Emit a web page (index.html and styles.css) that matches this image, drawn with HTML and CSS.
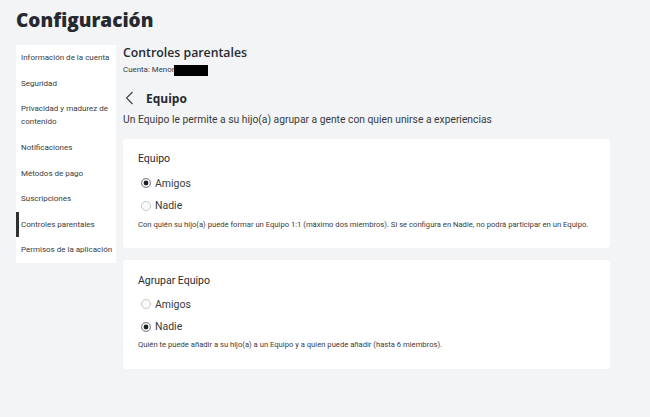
FILE: index.html
```html
<!DOCTYPE html>
<html lang="es">
<head>
<meta charset="utf-8">
<title>Configuración</title>
<link rel="stylesheet" href="styles.css">
</head>
<body>
<h1 class="page-title">Configuración</h1>
<div class="layout">
  <nav class="sidebar">
    <div class="nav-item">Información de la cuenta</div>
    <div class="nav-item">Seguridad</div>
    <div class="nav-item">Privacidad y madurez de contenido</div>
    <div class="nav-item">Notificaciones</div>
    <div class="nav-item">Métodos de pago</div>
    <div class="nav-item">Suscripciones</div>
    <div class="nav-item active">Controles parentales</div>
    <div class="nav-item">Permisos de la aplicación</div>
  </nav>
  <main class="main">
    <h2 class="section-title">Controles parentales</h2>
    <div class="account">Cuenta: Menor<span class="redact"></span></div>
    <div class="back-row">
      <svg class="chev" width="9" height="14" viewBox="0 0 9 14"><polyline points="7.5,1 1.5,7 7.5,13" fill="none" stroke="#393b3d" stroke-width="1.1"/></svg>
      <span class="back-title">Equipo</span>
    </div>
    <p class="intro">Un Equipo le permite a su hijo(a) agrupar a gente con quien unirse a experiencias</p>
    <section class="card">
      <div class="card-title">Equipo</div>
      <div class="radios">
        <div class="radio-row"><span class="radio on"></span><span class="label">Amigos</span></div>
        <div class="radio-row"><span class="radio"></span><span class="label">Nadie</span></div>
      </div>
      <p class="hint">Con quién su hijo(a) puede formar un Equipo 1:1 (máximo dos miembros). Si se configura en Nadie, no podrá participar en un Equipo.</p>
    </section>
    <section class="card">
      <div class="card-title">Agrupar Equipo</div>
      <div class="radios">
        <div class="radio-row"><span class="radio"></span><span class="label">Amigos</span></div>
        <div class="radio-row"><span class="radio on"></span><span class="label">Nadie</span></div>
      </div>
      <p class="hint">Quién te puede añadir a su hijo(a) a un Equipo y a quien puede añadir (hasta 6 miembros).</p>
    </section>
  </main>
</div>
</body>
</html>
```
FILE: styles.css
```css
* { box-sizing: border-box; }
html, body { margin: 0; }
body {
  background: #f2f4f5;
  font-family: Roboto, "Liberation Sans", sans-serif;
  color: #393b3d;
  padding: 6px 16px 0 16px;
}
.page-title {
  margin: 0 0 11px 0;
  font-family: "Open Sans", sans-serif;
  font-size: 19px;
  font-weight: 800;
  line-height: 28px;
  color: #272930;
}
.layout {
  display: flex;
  gap: 7px;
  align-items: flex-start;
}
.sidebar {
  width: 100px;
  background: #fff;
  display: flex;
  flex-direction: column;
}
.nav-item {
  font-size: 8px;
  line-height: 13px;
  padding: 6.3px 2px 6.3px 5px;
  color: #393b3d;
}
.nav-item.active {
  box-shadow: inset 3px 0 0 #2d2f31;
}
.main {
  width: 487px;
  display: flex;
  flex-direction: column;
}
.section-title {
  margin: 0;
  font-family: "Open Sans", sans-serif;
  font-size: 12.3px;
  font-weight: 600;
  line-height: 16px;
  color: #272930;
}
.account {
  margin-top: 3px;
  font-size: 7.9px;
  line-height: 12px;
  color: #393b3d;
  display: flex;
  align-items: center;
}
.redact {
  display: inline-block;
  width: 34px;
  height: 11px;
  background: #000;
}
.back-row {
  margin-top: 13px;
  height: 18px;
  display: flex;
  align-items: center;
  gap: 12px;
  padding-left: 2px;
}
.back-title {
  font-family: "Open Sans", sans-serif;
  font-size: 12px;
  font-weight: 700;
  color: #272930;
}
.intro {
  margin: 6px 0 0 0;
  font-size: 10.3px;
  line-height: 14px;
  color: #393b3d;
}
.card {
  margin-top: 12px;
  background: #fff;
  border-radius: 4px;
  padding: 13px 15px 17px 15px;
}
.card + .card { margin-top: 12px; padding-top: 14px; padding-bottom: 18px; }
.card-title {
  font-size: 10.5px;
  line-height: 14px;
  color: #272930;
}
.radios {
  margin-top: 6px;
  display: flex;
  flex-direction: column;
}
.card + .card .radios { margin-top: 5px; }
.radio-row {
  height: 22.5px;
  display: flex;
  align-items: center;
  gap: 4px;
  padding-left: 3px;
}
.radio {
  width: 10px;
  height: 10px;
  border-radius: 50%;
  border: 1px solid #c6c7c9;
  background: #fafafa;
}
.radio.on {
  border-color: #8e9093;
  background: #1f2022;
  box-shadow: inset 0 0 0 1.6px #fff;
}
.label {
  font-size: 10.5px;
  color: #393b3d;
}
.hint {
  margin: 2px 0 0 0;
  font-size: 7.65px;
  line-height: 12px;
  color: #393b3d;
}
.card + .card .hint { margin-top: 1px; }
```
